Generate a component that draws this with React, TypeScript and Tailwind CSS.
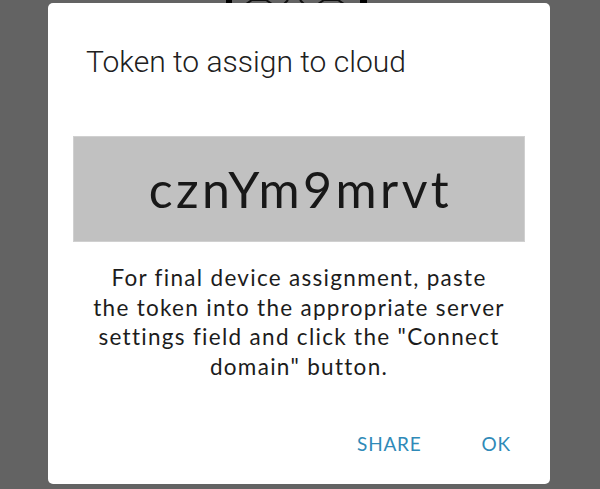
import React from "react";

const token = "cznYm9mrvt";

export default function App() {
    return (
        <div className="relative h-[489px] w-[600px] overflow-hidden bg-[#636363]">
            {/* bottom edge of the page behind the dialog */}
            <svg className="absolute left-[226px] top-0" width="142" height="4" viewBox="0 0 142 4">
                <rect x="0" y="0" width="6" height="4" fill="#000" />
                <path d="M20 4 L26 0 L40 0 L46 4" fill="none" stroke="#111" strokeWidth="2" />
                <path d="M58 4 L62 0 M74 0 L78 4" fill="none" stroke="#111" strokeWidth="2" />
                <path d="M92 4 L98 0 L112 0 L118 4" fill="none" stroke="#111" strokeWidth="2" />
                <rect x="134" y="0" width="7" height="4" fill="#000" />
            </svg>

            {/* Dialog */}
            <div
                className="relative ml-[48px] mt-[3px] flex h-[481px] w-[502px] flex-col rounded-[5px] bg-white"
                style={{ fontFamily: "Lato, 'Open Sans', sans-serif" }}
            >
                <h2
                    className="pl-[38px] pt-[41px] text-[30px] leading-[36px] font-light text-[#202020]"
                    style={{ fontFamily: "Roboto, sans-serif" }}
                >
                    Token to assign to cloud
                </h2>

                <div className="mx-[25px] mt-[56px] flex h-[106px] items-center justify-center border border-[#d0d0d0] bg-[#c1c1c1]">
                    <span className="pl-[3px] text-[50px] leading-none tracking-[3.4px] text-[#181818]">{token}</span>
                </div>

                <p className="mt-[21px] text-center text-[22.5px] leading-[29.5px] tracking-[1.3px] text-[#1c1c1c]">
                    For final device assignment, paste
                    <br />
                    the token into the appropriate server
                    <br />
                    settings field and click the "Connect
                    <br />
                    domain" button.
                </p>

                <div className="mt-auto mb-[26px] flex justify-end gap-[60px] pr-[39px] text-[19px] tracking-[0.8px] text-[#2f8ab8]">
                    <button>SHARE</button>
                    <button>OK</button>
                </div>
            </div>
        </div>
    );
}
